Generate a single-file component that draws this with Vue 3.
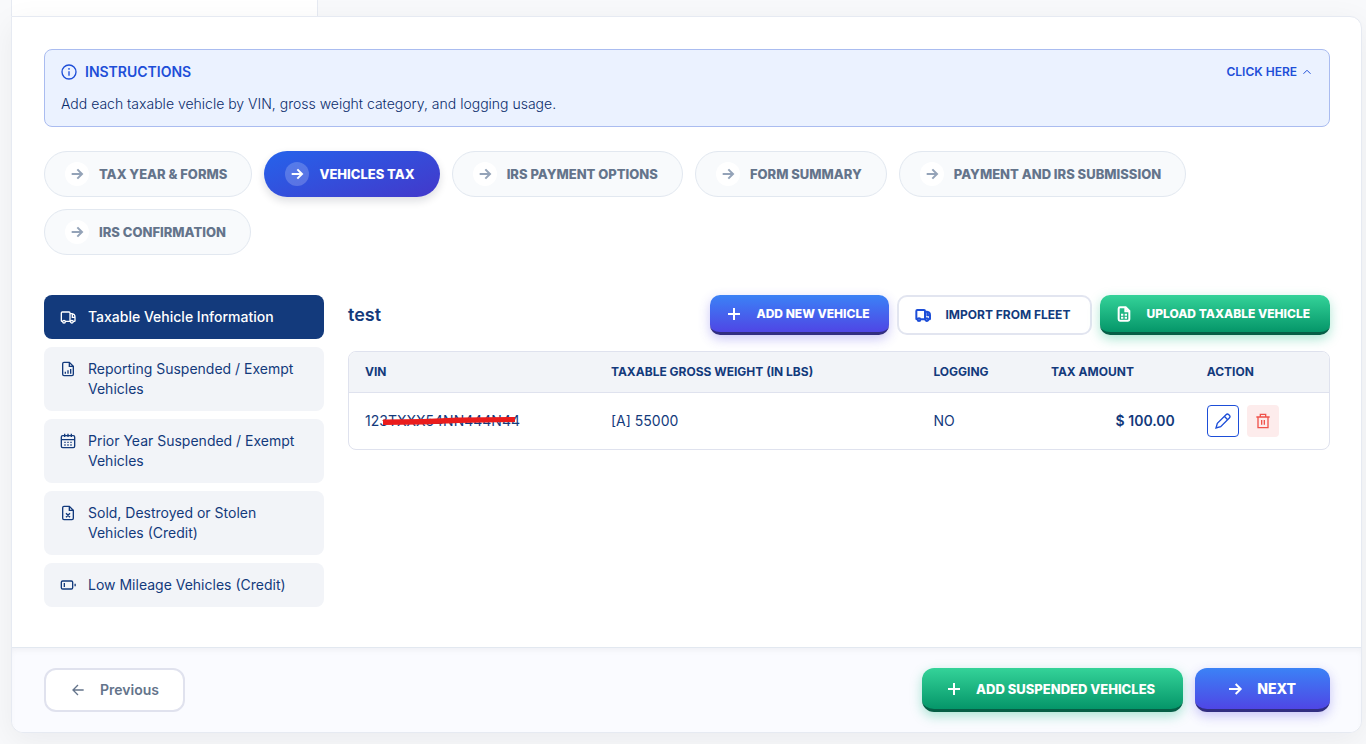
<script setup>
import { ref } from 'vue'

const steps = [
  'Tax Year & Forms',
  'Vehicles Tax',
  'IRS Payment Options',
  'Form Summary',
  'Payment and IRS Submission',
  'IRS Confirmation',
]
const activeStep = ref(1)

const sections = [
  { label: 'Taxable Vehicle Information', icon: 'truck' },
  { label: 'Reporting Suspended / Exempt Vehicles', icon: 'chart' },
  { label: 'Prior Year Suspended / Exempt Vehicles', icon: 'calendar' },
  { label: 'Sold, Destroyed or Stolen Vehicles (Credit)', icon: 'fileX' },
  { label: 'Low Mileage Vehicles (Credit)', icon: 'battery' },
]
const activeSection = ref(0)

const icons = {
  truck: 'M8 18.500h7.500M4 18.500H3a1 1 0 0 1-1-1V6a1.500 1.500 0 0 1 1.500-1.500h10A1.500 1.500 0 0 1 15 6v12M15 7h3a5 5 0 0 1 4.500 5v5.500a1 1 0 0 1-1 1H20M18.500 8v4.500h4M4 19a2 2 0 1 0 4 0a2 2 0 1 0-4 0M15.800 19a2 2 0 1 0 4 0a2 2 0 1 0-4 0',
  chart: 'M14 2H6a2 2 0 0 0-2 2v16a2 2 0 0 0 2 2h12a2 2 0 0 0 2-2V8zM14 2v6h6M8 19v-3M12 19v-5M16 19v-7',
  calendar: 'M4 4h16a2 2 0 0 1 2 2v14a2 2 0 0 1-2 2H4a2 2 0 0 1-2-2V6a2 2 0 0 1 2-2zM7 1v5M17 1v5M12 1v5M2 10h20M6.500 14h2M11 14h2M15.500 14h2M6.500 18h2M11 18h2M15.500 18h2',
  fileX: 'M14 2H6a2 2 0 0 0-2 2v16a2 2 0 0 0 2 2h12a2 2 0 0 0 2-2V8zM14 2v6h6M9 12.500l6 6M15 12.500l-6 6',
  battery: 'M4 6h13a2 2 0 0 1 2 2v8a2 2 0 0 1-2 2H4a2 2 0 0 1-2-2V8a2 2 0 0 1 2-2zM22.700 10v4M6.500 9v6',
}

const vehicles = [
  { vin: '123TXXX54NN444N44', weight: '[A] 55000', logging: 'NO', tax: '$ 100.00' },
]
</script>

<template>
  <div class="page">
    <div class="tab-strip"><div class="tab"></div></div>
    <div class="card">
      <main class="content">
        <section class="instructions">
          <div class="instructions-head">
            <h2>
              <svg class="icon" viewBox="0 0 24 24"><circle cx="12" cy="12" r="10.500" /><path d="M12 6v2.500M12 11v6.500" /></svg>
              Instructions
            </h2>
            <button type="button" class="toggle">
              Click here
              <svg viewBox="0 0 24 24"><path d="M5 15.500l7-7 7 7" /></svg>
            </button>
          </div>
          <p>Add each taxable vehicle by VIN, gross weight category, and logging usage.</p>
        </section>

        <nav class="steps" aria-label="Filing steps">
          <button
            v-for="(step, i) in steps"
            :key="step"
            type="button"
            class="step"
            :class="{ active: i === activeStep }"
            @click="activeStep = i"
          >
            <span class="dot"><svg viewBox="0 0 24 24"><path d="M4 12h15M12.500 5l7 7-7 7" /></svg></span>
            {{ step }}
          </button>
        </nav>

        <div class="columns">
          <nav class="sections" aria-label="Vehicle sections">
            <button
              v-for="(s, i) in sections"
              :key="s.label"
              type="button"
              class="section"
              :class="{ active: i === activeSection }"
              @click="activeSection = i"
            >
              <svg class="icon" viewBox="0 0 24 24"><path :d="icons[s.icon]" /></svg>
              <span>{{ s.label }}</span>
            </button>
          </nav>

          <section class="vehicles">
            <header>
              <h1>test</h1>
              <div class="actions">
                <button type="button" class="btn blue">
                  <svg class="icon bold" viewBox="0 0 24 24"><path d="M12 3v18M3 12h18" /></svg>
                  Add New Vehicle
                </button>
                <button type="button" class="btn outline">
                  <svg class="icon bold" viewBox="0 0 24 24"><path :d="icons.truck" /></svg>
                  Import from Fleet
                </button>
                <button type="button" class="btn green">
                  <svg class="icon bold" viewBox="0 0 24 24">
                    <path d="M14.500 2H6a2 2 0 0 0-2 2v16a2 2 0 0 0 2 2h12a2 2 0 0 0 2-2V7.500zM14 2v6h6" />
                    <path d="M7.500 13h3.500M13 13h3.500M7.500 17.500h3.500M13 17.500h3.500" />
                  </svg>
                  Upload Taxable Vehicle
                </button>
              </div>
            </header>

            <div class="table-box">
              <table>
                <thead>
                  <tr>
                    <th class="c-vin" scope="col">VIN</th>
                    <th class="c-weight" scope="col">Taxable Gross Weight (in lbs)</th>
                    <th class="c-logging" scope="col">Logging</th>
                    <th class="c-tax" scope="col">Tax Amount</th>
                    <th scope="col">Action</th>
                  </tr>
                </thead>
                <tbody>
                  <tr v-for="v in vehicles" :key="v.vin">
                    <td>
                      <span class="vin">
                        {{ v.vin }}
                        <svg viewBox="0 0 134 10"><path d="M0 3.500L40 3L76 1.500L132 1V6L76 7L40 8.500L0 9z" /></svg>
                      </span>
                    </td>
                    <td>{{ v.weight }}</td>
                    <td>{{ v.logging }}</td>
                    <td class="amount">{{ v.tax }}</td>
                    <td>
                      <div class="row-actions">
                        <button type="button" class="edit" aria-label="Edit vehicle">
                          <svg class="icon" viewBox="0 0 24 24"><path d="M1.500 22.500l2-7L16.500 2.500a3 3 0 0 1 4.200 0l.8.8a3 3 0 0 1 0 4.200L8.500 20.500zM14 5l5 5" /></svg>
                        </button>
                        <button type="button" class="delete" aria-label="Delete vehicle">
                          <svg class="icon" viewBox="0 0 24 24"><path d="M2 6h20M4.500 6v16h15V6M8 6V2h8v4M10 10.500v7M14 10.500v7" /></svg>
                        </button>
                      </div>
                    </td>
                  </tr>
                </tbody>
              </table>
            </div>
          </section>
        </div>
      </main>

      <footer class="footer">
        <button type="button" class="btn large previous">
          <svg class="icon" viewBox="0 0 24 24"><path d="M20.500 12H4.500M12 4.500L4.500 12l7.500 7.500" /></svg>
          Previous
        </button>
        <div class="footer-right">
          <button type="button" class="btn large green">
            <svg class="icon bold" viewBox="0 0 24 24"><path d="M12 3v18M3 12h18" /></svg>
            Add Suspended Vehicles
          </button>
          <button type="button" class="btn large blue next">
            <svg class="icon bold" viewBox="0 0 24 24"><path d="M3 12h17M13 4.500l7.500 7.500-7.500 7.500" /></svg>
            Next
          </button>
        </div>
      </footer>
    </div>
  </div>
</template>

<style>
body {
  background: #f8f9fb;
}
</style>

<style scoped>
* {
  box-sizing: border-box;
}
.page {
  min-height: 100vh;
  padding: 0 4px 11px 11px;
  color: #133a7c;
  font-family: Inter, "Liberation Sans", sans-serif;
  font-size: 14px;
  line-height: 20px;
  overflow: hidden;
}
button {
  font: inherit;
  color: inherit;
  cursor: pointer;
}
svg {
  display: block;
  fill: none;
  stroke: currentColor;
  stroke-width: 2;
  flex: none;
}
.icon {
  width: 16px;
  height: 16px;
}
.tab-strip {
  height: 16px;
}
.tab {
  width: 307px;
  height: 16px;
  background: #fff;
  border: solid #e6eaf2;
  border-width: 0 1px;
}
.card {
  background: #fff;
  border: 1px solid #e6eaf2;
  border-radius: 0 12px 12px 12px;
  box-shadow: 0 8px 32px rgba(15, 23, 42, 0.06);
}
.content {
  padding: 32px 31px 40px 32px;
}
.instructions {
  padding: 12px 16px;
  background: #ebf2ff;
  border: 1px solid #aabcf0;
  border-radius: 8px;
}
.instructions-head {
  display: flex;
  justify-content: space-between;
  align-items: center;
  margin-bottom: 12px;
  color: #1d4ed8;
}
h2 {
  display: flex;
  align-items: center;
  gap: 8px;
  margin: 0;
  font-size: 14px;
  font-weight: 600;
  text-transform: uppercase;
}
.toggle {
  display: flex;
  align-items: center;
  gap: 4px;
  padding: 0;
  border: 0;
  background: none;
  font-size: 12px;
  font-weight: 600;
  text-transform: uppercase;
}
.toggle svg {
  width: 12px;
  height: 12px;
}
.instructions p {
  margin: 0;
  color: #0a2c6b;
  font-weight: 300;
}
.steps {
  display: flex;
  flex-wrap: wrap;
  gap: 12px;
  margin: 24px 0 40px;
}
.step {
  display: flex;
  align-items: center;
  gap: 10px;
  padding: 10px 24px 10px 20px;
  border: 1px solid #e2e8f0;
  border-radius: 23px;
  background: #f8fafc;
  color: #64748b;
  font-size: 13px;
  font-weight: 800;
  line-height: 24px;
  text-transform: uppercase;
}
.dot {
  display: grid;
  place-items: center;
  width: 24px;
  height: 24px;
  border-radius: 50%;
  background: #fff;
  color: #94a3b8;
}
.dot svg {
  width: 16px;
  height: 16px;
  stroke-width: 3;
}
.step.active {
  border-color: transparent;
  background: linear-gradient(160deg, #2563eb, #4338ca) border-box;
  color: #fff;
  box-shadow: 0 4px 8px rgba(15, 23, 42, 0.14);
}
.step.active .dot {
  background: rgba(255, 255, 255, 0.2);
  color: #fff;
}
.columns {
  display: flex;
  align-items: flex-start;
  gap: 24px;
}
.sections {
  display: flex;
  flex-direction: column;
  gap: 8px;
  width: 280px;
  flex: none;
}
.section {
  display: flex;
  gap: 12px;
  padding: 12px 16px;
  border: 0;
  border-radius: 8px;
  background: #f2f4f8;
  text-align: left;
}
.section .icon {
  margin-top: 2px;
}
.section.active {
  background: #133a7c;
  color: #fff;
  font-weight: 500;
}
.vehicles {
  flex: 1;
  min-width: 0;
}
.vehicles header {
  display: flex;
  justify-content: space-between;
  align-items: center;
  margin-bottom: 16px;
}
h1 {
  margin: 0;
  font-size: 18px;
  font-weight: 600;
}
.actions,
.footer-right {
  display: flex;
  gap: 8px;
}
.btn {
  display: flex;
  align-items: center;
  gap: 14px;
  height: 40px;
  padding: 0 20px 0 16px;
  border: 0;
  border-radius: 10px;
  color: #fff;
  font-size: 12px;
  font-weight: 800;
  text-transform: uppercase;
  white-space: nowrap;
}
.blue {
  background: linear-gradient(#3b82f6, #4f46e5);
  border-bottom: 3px solid #312e81;
  box-shadow: 0 4px 12px rgba(79, 70, 229, 0.3);
}
.green {
  background: linear-gradient(#34d399, #059669);
  border-bottom: 3px solid #065f46;
  box-shadow: 0 4px 12px rgba(16, 185, 129, 0.35);
}
.outline {
  border: 2px solid #e2e5f0;
  background: #fff;
  color: #133a7c;
  font-weight: 700;
}
.outline .icon {
  color: #1d4ed8;
}
.bold {
  stroke-width: 3;
}
.table-box {
  border: 1px solid #dfe2ee;
  border-radius: 8px;
  overflow: hidden;
}
table {
  width: 100%;
  border-collapse: collapse;
  table-layout: fixed;
}
.c-vin {
  width: 25.1%;
}
.c-weight {
  width: 32.9%;
}
.c-logging {
  width: 12%;
}
.c-tax {
  width: 15.9%;
}
th {
  height: 40px;
  padding: 0 16px;
  background: #f2f4f8;
  font-size: 12px;
  font-weight: 700;
  text-align: left;
  text-transform: uppercase;
}
td {
  height: 57px;
  padding: 0 16px;
  border-top: 1px solid #dfe2ee;
}
.amount {
  font-weight: 600;
  text-align: right;
}
.vin {
  position: relative;
  display: inline-block;
}
.vin svg {
  position: absolute;
  left: 18px;
  top: 5px;
  width: 134px;
  height: 10px;
  fill: #ea1c1c;
  stroke: none;
}
.row-actions {
  display: flex;
  gap: 8px;
}
.row-actions button {
  display: grid;
  place-items: center;
  width: 32px;
  height: 32px;
  padding: 0;
  border: 0;
  border-radius: 4px;
}
.row-actions .edit {
  border: 1px solid #1d4ed8;
  background: #fff;
  color: #1d4ed8;
}
.row-actions .delete {
  background: #fdecec;
  color: #f0524b;
}
.footer {
  display: flex;
  justify-content: space-between;
  padding: 20px 31px 20px 32px;
  border-top: 1px solid #e2e8f0;
  border-radius: 0 0 12px 12px;
  background: #fafbff;
  box-shadow: inset 0 4px 6px -2px rgba(15, 23, 42, 0.05);
}
.footer-right {
  gap: 12px;
}
.large {
  height: 44px;
  padding: 0 28px 0 24px;
  border-radius: 12px;
  font-size: 13px;
}
.previous {
  padding: 0 24px;
  border: 2px solid #e0e2ee;
  background: #fff;
  color: #64748b;
  font-size: 14px;
  font-weight: 600;
  text-transform: none;
}
.next {
  padding: 0 34px 0 32px;
  font-size: 14px;
}
</style>
